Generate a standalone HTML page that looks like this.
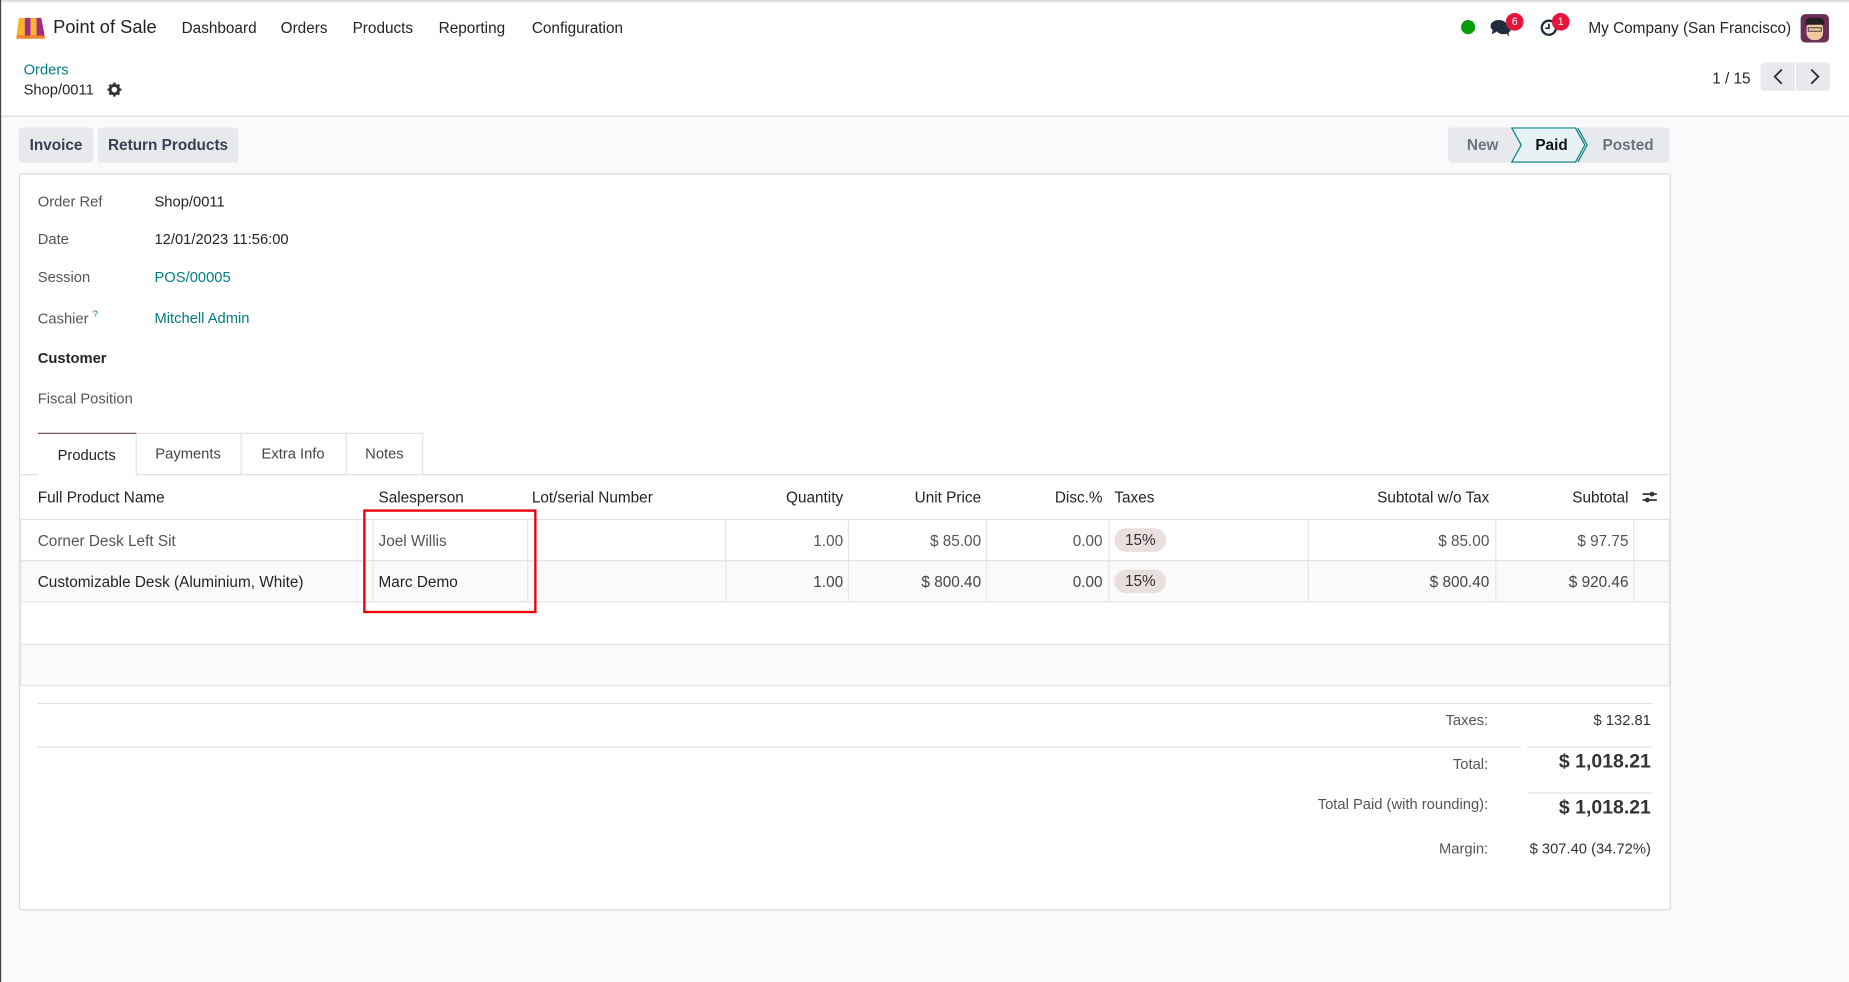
<!DOCTYPE html>
<html><head><meta charset="utf-8"><style>
*{box-sizing:border-box;margin:0;padding:0}
html,body{width:1849px;height:982px;overflow:hidden;background:#f9fafb}
#w{position:absolute;left:0;top:0;width:1568px;height:833px;transform:scale(1.17921);transform-origin:0 0;font-family:"Liberation Sans",sans-serif;font-size:13px;color:#212529;background:#f9fafb}
.a{position:absolute;white-space:nowrap}
.tc{color:#017e84}
.lab{color:#555}
.f{font-size:12.5px}
.vl{position:absolute;width:1px;background:#e5e5e5}
.hl{position:absolute;height:1px;background:#dee2e6}
.r{text-align:right}
.badge{position:absolute;background:#e8143c;color:#fff;border-radius:50%;width:15px;height:15px;font-size:9px;text-align:center;line-height:15px}
.pill{position:absolute;background:#e9dfdf;border-radius:10px;width:44px;height:20px;text-align:center;line-height:20px;color:#333}
</style></head><body><div id="w">
<div class="a" style="left:0;top:0;width:1568px;height:99px;background:#fff;border-bottom:1px solid #d8dadd"></div>
<div class="a" style="left:0;top:0;width:1568px;height:2px;background:#e2e2e2"></div>
<div class="a" style="left:0;top:0;width:1px;height:833px;background:#444"></div>
<svg class="a" style="left:13px;top:15px" width="25" height="18" viewBox="0 0 25 18">
<path d="M3 0h5v16H1z" fill="#f9b52a"/><path d="M8 0h5v16H8z" fill="#a02f84"/><path d="M13 0h5v16h-5z" fill="#f9b52a"/><path d="M18 0h4l3 16h-7z" fill="#a02f84"/>
<path d="M1 15h24v3H1z" fill="#f07a1b" opacity=".9"/></svg>
<div class="a" style="left:45px;top:15px;font-size:15.5px;color:#222">Point of Sale</div>
<div class="a" style="left:154px;top:16px">Dashboard</div>
<div class="a" style="left:238px;top:16px">Orders</div>
<div class="a" style="left:299px;top:16px">Products</div>
<div class="a" style="left:372px;top:16px">Reporting</div>
<div class="a" style="left:451px;top:16px">Configuration</div>
<div class="a" style="left:1239px;top:17px;width:12px;height:12px;border-radius:50%;background:#0a9d0a"></div>
<svg class="a" style="left:1264px;top:16px" width="17" height="15" viewBox="0 0 17 15"><ellipse cx="7" cy="6" rx="7" ry="5" fill="#1f2d3d"/><ellipse cx="11" cy="9" rx="6" ry="4" fill="#1f2d3d"/><path d="M2 9l-1 4 4-2z M13 12l3 3-1-4z" fill="#1f2d3d"/></svg>
<div class="badge" style="left:1277px;top:11px">6</div>
<svg class="a" style="left:1306px;top:16px" width="15" height="15" viewBox="0 0 15 15"><circle cx="7.5" cy="7.5" r="6" fill="none" stroke="#1f2d3d" stroke-width="2"/><path d="M7.5 4v4h-3" fill="none" stroke="#1f2d3d" stroke-width="1.5"/></svg>
<div class="badge" style="left:1316px;top:11px">1</div>
<div class="a" style="left:1347px;top:16px">My Company (San Francisco)</div>
<div class="a" style="left:1527px;top:12px;width:24px;height:24px;border-radius:4px;background:#6b2d55;overflow:hidden">
<div style="position:absolute;left:5px;top:6px;width:14px;height:16px;border-radius:6px;background:#f3c9a0"></div>
<div style="position:absolute;left:4px;top:3px;width:16px;height:6px;border-radius:4px 4px 0 0;background:#222"></div>
<div style="position:absolute;left:6px;top:11px;width:12px;height:4px;border:1px solid #555"></div></div>
<div class="a tc f" style="left:20px;top:52px">Orders</div>
<div class="a f" style="left:20px;top:69px">Shop/0011</div>
<svg class="a" style="left:91px;top:70px" width="12" height="12" viewBox="0 0 12 12"><circle cx="6" cy="6" r="3.6" fill="none" stroke="#333" stroke-width="2.4"/><path d="M6 0v3M6 9v3M0 6h3M9 6h3M1.8 1.8l2 2M8.2 8.2l2 2M1.8 10.2l2-2M8.2 3.8l2-2" stroke="#333" stroke-width="2"/></svg>
<div class="a" style="left:1452px;top:59px">1 / 15</div>
<div class="a" style="left:1493px;top:53px;width:29px;height:24px;background:#e7e9ed;border-radius:3px 0 0 3px"></div>
<div class="a" style="left:1523px;top:53px;width:29px;height:24px;background:#e7e9ed;border-radius:0 3px 3px 0"></div>
<svg class="a" style="left:1502px;top:58px" width="12" height="14"><path d="M9 1L3 7l6 6" fill="none" stroke="#333" stroke-width="1.6"/></svg>
<svg class="a" style="left:1533px;top:58px" width="12" height="14"><path d="M3 1l6 6-6 6" fill="none" stroke="#333" stroke-width="1.6"/></svg>
<div class="a" style="left:16px;top:108px;width:63px;height:30px;background:#e7e9ed;border-radius:3px;font-weight:bold;line-height:30px;text-align:center;color:#374151">Invoice</div>
<div class="a" style="left:83px;top:108px;width:119px;height:30px;background:#e7e9ed;border-radius:3px;font-weight:bold;line-height:30px;text-align:center;color:#374151">Return Products</div>
<div class="a" style="left:1228px;top:108px;width:188px;height:30px;background:#e7e9ed;border-radius:3px"></div>
<svg class="a" style="left:1278px;top:108px" width="76" height="30"><path d="M4 0.5h54l8 14.5-8 14.5H4l8-14.5z" fill="#e6f2f3" stroke="#017e84"/><path d="M60 0.5l8 14.5-8 14.5" fill="none" stroke="#017e84"/></svg>
<div class="a" style="left:1244px;top:115px;font-weight:bold;color:#6b7280">New</div>
<div class="a" style="left:1302px;top:115px;font-weight:bold;color:#111">Paid</div>
<div class="a" style="left:1359px;top:115px;font-weight:bold;color:#6b7280">Posted</div>
<div class="a" style="left:16px;top:147px;width:1401px;height:625px;background:#fff;border:1px solid #d8dadd;border-radius:2px"></div>
<div class="a lab f" style="left:32px;top:164px">Order Ref</div><div class="a f" style="left:131px;top:164px">Shop/0011</div>
<div class="a lab f" style="left:32px;top:196px">Date</div><div class="a f" style="left:131px;top:196px">12/01/2023 11:56:00</div>
<div class="a lab f" style="left:32px;top:228px">Session</div><div class="a tc f" style="left:131px;top:228px">POS/00005</div>
<div class="a lab f" style="left:32px;top:262px">Cashier <sup style="font-size:8px;color:#017e84">?</sup></div><div class="a tc f" style="left:131px;top:263px">Mitchell Admin</div>
<div class="a f" style="left:32px;top:297px;font-weight:bold">Customer</div>
<div class="a lab f" style="left:32px;top:331px">Fiscal Position</div>
<div class="hl" style="left:17px;top:402px;width:1399px"></div>
<div class="a" style="left:32px;top:367px;width:327px;height:36px;border:1px solid #dee2e6;border-bottom:none"></div>
<div class="a f" style="left:32px;top:367px;width:84px;height:36px;background:#fff;border-top:1px solid #714b67;border-right:1px solid #dee2e6;text-align:center;line-height:36px">Products</div>
<div class="a f" style="left:115px;top:367px;width:90px;height:36px;border-right:1px solid #dee2e6;text-align:center;line-height:36px;color:#444">Payments</div>
<div class="a f" style="left:204px;top:367px;width:90px;height:36px;border-right:1px solid #dee2e6;text-align:center;line-height:36px;color:#444">Extra Info</div>
<div class="a f" style="left:293px;top:367px;width:66px;height:36px;text-align:center;line-height:36px;color:#444">Notes</div>
<div class="a" style="left:17px;top:475px;width:1399px;height:36px;background:#fafafa"></div>
<div class="a" style="left:17px;top:546px;width:1399px;height:35px;background:#fafafa"></div>
<div class="hl" style="left:17px;top:440px;width:1399px"></div>
<div class="hl" style="left:17px;top:475px;width:1399px"></div>
<div class="hl" style="left:17px;top:510px;width:1399px"></div>
<div class="hl" style="left:17px;top:546px;width:1399px"></div>
<div class="hl" style="left:17px;top:581px;width:1399px"></div>
<div class="vl" style="left:17px;top:440px;height:141px"></div>
<div class="vl" style="left:1415px;top:440px;height:141px"></div>
<div class="vl" style="left:316px;top:440px;height:71px"></div>
<div class="vl" style="left:447px;top:440px;height:71px"></div>
<div class="vl" style="left:615px;top:440px;height:71px"></div>
<div class="vl" style="left:719px;top:440px;height:71px"></div>
<div class="vl" style="left:836px;top:440px;height:71px"></div>
<div class="vl" style="left:940px;top:440px;height:71px"></div>
<div class="vl" style="left:1109px;top:440px;height:71px"></div>
<div class="vl" style="left:1268px;top:440px;height:71px"></div>
<div class="vl" style="left:1385px;top:440px;height:71px"></div>
<div class="a" style="left:32px;top:414px">Full Product Name</div>
<div class="a" style="left:321px;top:414px">Salesperson</div>
<div class="a" style="left:451px;top:414px">Lot/serial Number</div>
<div class="a r" style="right:853px;top:414px">Quantity</div>
<div class="a r" style="right:736px;top:414px">Unit Price</div>
<div class="a r" style="right:633px;top:414px">Disc.%</div>
<div class="a" style="left:945px;top:414px">Taxes</div>
<div class="a r" style="right:305px;top:414px">Subtotal w/o Tax</div>
<div class="a r" style="right:187px;top:414px">Subtotal</div>
<svg class="a" style="left:1392px;top:415px" width="14" height="13"><path d="M1 4h12M1 9h12" stroke="#333" stroke-width="1.5"/><circle cx="9" cy="4" r="2" fill="#333"/><circle cx="5" cy="9" r="2" fill="#333"/></svg>
<div class="a" style="left:32px;top:451px;color:#555">Corner Desk Left Sit</div>
<div class="a" style="left:321px;top:451px;color:#555">Joel Willis</div>
<div class="a r" style="right:853px;top:451px;color:#555">1.00</div>
<div class="a r" style="right:736px;top:451px;color:#555">$ 85.00</div>
<div class="a r" style="right:633px;top:451px;color:#555">0.00</div>
<div class="pill" style="left:945px;top:448px">15%</div>
<div class="a r" style="right:305px;top:451px;color:#555">$ 85.00</div>
<div class="a r" style="right:187px;top:451px;color:#555">$ 97.75</div>
<div class="a" style="left:32px;top:486px">Customizable Desk (Aluminium, White)</div>
<div class="a" style="left:321px;top:486px">Marc Demo</div>
<div class="a r" style="right:853px;top:486px;color:#444">1.00</div>
<div class="a r" style="right:736px;top:486px;color:#444">$ 800.40</div>
<div class="a r" style="right:633px;top:486px;color:#444">0.00</div>
<div class="pill" style="left:945px;top:483px">15%</div>
<div class="a r" style="right:305px;top:486px;color:#444">$ 800.40</div>
<div class="a r" style="right:187px;top:486px;color:#444">$ 920.46</div>
<div class="a" style="left:308px;top:432px;width:147px;height:88px;border:2px solid #e8000b"></div>
<div class="hl" style="left:32px;top:596px;width:1369px"></div>
<div class="a r lab f" style="right:306px;top:604px">Taxes:</div>
<div class="a r f" style="right:168px;top:604px;color:#333">$ 132.81</div>
<div class="hl" style="left:32px;top:633px;width:1258px"></div>
<div class="hl" style="left:1296px;top:633px;width:105px"></div>
<div class="a r lab f" style="right:306px;top:641px">Total:</div>
<div class="a r" style="right:168px;top:637px;font-size:16.5px;font-weight:bold;color:#333">$ 1,018.21</div>
<div class="hl" style="left:1296px;top:672px;width:105px"></div>
<div class="a r lab f" style="right:306px;top:675px">Total Paid (with rounding):</div>
<div class="a r" style="right:168px;top:676px;font-size:16.5px;font-weight:bold;color:#333">$ 1,018.21</div>
<div class="a r lab f" style="right:306px;top:713px">Margin:</div>
<div class="a r f" style="right:168px;top:713px;color:#333">$ 307.40 (34.72%)</div>
</div></body></html>
